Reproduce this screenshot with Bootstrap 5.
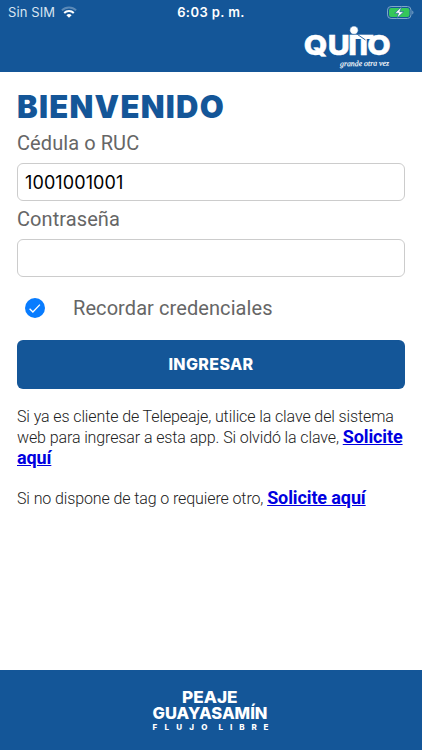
<!DOCTYPE html>
<html lang="es">
<head>
<meta charset="utf-8">
<meta name="viewport" content="width=device-width, initial-scale=1">
<title>Bienvenido</title>
<link href="https://cdn.jsdelivr.net/npm/bootstrap@5.3.0/dist/css/bootstrap.min.css" rel="stylesheet">
<style>
body{font-family:Roboto,"Liberation Sans",sans-serif;overflow:hidden}
.brand-bg{background:#145698}
.app-header{height:72px}
.status-row{height:24px;padding:0 8px 0 8px;font:400 13px/24px Inter,sans-serif}
.status-row .clock{font-weight:600;letter-spacing:.4px}
.status-row .carrier{color:#d7e4f1;letter-spacing:.1px}
.wifi{margin-left:6px}
.logo-row{padding-right:28px}
.app-main{padding:20px 17px 0}
.page-title{font:900 31px/30px Inter,sans-serif;color:#145698;margin:0 0 9px;height:30px;letter-spacing:1.25px;white-space:nowrap}
.field-label{font-size:20px;line-height:24px;color:#666;margin:0;display:block;letter-spacing:.08px}
.field-input{height:38px;border:1px solid #ccc;border-radius:6px;padding:0 7px;font:400 18px/36px Inter,sans-serif;color:#000;letter-spacing:.1px;box-shadow:none}
.field-gap{margin-bottom:5.5px}
.check-row{height:24px;padding-left:8px;gap:28px;margin:19px 0 20px}
.submit-btn{height:49px;border-radius:6px;font:800 16px/49px Inter,sans-serif;color:#fff;border:0;padding:0;letter-spacing:.35px}
.info-text{font-weight:300;font-size:16px;line-height:20px;color:#222;margin:0 0 19px;letter-spacing:-.11px}
.info-text:first-of-type{margin-top:18px}
.info-text a{font-weight:700;font-size:18px;line-height:20px;color:#0000e0;text-decoration:underline}
.app-footer{height:80px}
</style>
<script src="https://cdn.jsdelivr.net/npm/bootstrap@5.3.0/dist/js/bootstrap.bundle.min.js"></script>
</head>
<body class="bg-white vh-100 d-flex flex-column">
<header class="app-header brand-bg text-white flex-shrink-0">
  <div class="status-row row g-0">
    <div class="col d-flex align-items-center">
      <span class="carrier">Sin SIM</span>
      <svg class="wifi" width="16" height="12" viewBox="0 0 16 12" fill="none" stroke="#fff" stroke-width="2"><path d="M.9 4.4a10.2 10.2 0 0 1 14.2 0" opacity=".3"/><path d="M3.2 7a6.8 6.8 0 0 1 9.6 0"/><path d="M8 11.8 5.4 9.2a3.7 3.7 0 0 1 5.2 0z" fill="#fff" stroke="none"/></svg>
    </div>
    <div class="col-auto clock">6:03 p. m.</div>
    <div class="col d-flex align-items-center justify-content-end">
      <svg width="27" height="13" viewBox="0 0 27 13"><rect x=".5" y=".5" width="23.5" height="12" rx="3.6" fill="none" stroke="#7fa6c8"/><rect x="2" y="2" width="20.5" height="9" rx="2.2" fill="#34c759"/><path d="M25.3 4.5v4c1.5-.6 1.5-3.4 0-4" fill="#7fa6c8"/><path d="M14.6.8 7.8 7.2h3.8L9.9 12.2l6.8-6.5h-3.9z" fill="#fff" stroke="#145698" stroke-width=".6"/></svg>
    </div>
  </div>
  <div class="logo-row d-flex justify-content-end">
    <svg width="92" height="47" viewBox="302 24 92 47" fill="#fff" font-family="Inter,sans-serif">
      <text transform="translate(303 0) scale(1.1 1)" x="0.6 22.6 41.2 46 58.4" y="55" font-weight="800" font-size="27.5" stroke="#fff" stroke-width=".5">QUITO</text>
      <circle cx="354" cy="30.2" r="4.2" stroke="#145698" stroke-width=".6"/>
      <path d="m357.5 34.5 8 5.5" stroke="#145698" stroke-width=".9"/>
      <text x="340" y="66" font-family="Liberation Serif,serif" font-style="italic" font-size="8" textLength="49" lengthAdjust="spacingAndGlyphs" stroke="#fff" stroke-width=".15" transform="rotate(-1 365 65)">grande  otra vez</text>
    </svg>
  </div>
</header>
<main class="app-main flex-grow-1">
  <h1 class="page-title">BIENVENIDO</h1>
  <form>
    <label class="field-label" for="user">Cédula o RUC</label>
    <input class="form-control field-input field-gap mt-2" id="user" type="text" value="1001001001">
    <label class="field-label" for="pass">Contraseña</label>
    <input class="form-control field-input mt-2" id="pass" type="password">
    <div class="check-row d-flex align-items-center">
      <svg width="20" height="20" viewBox="0 0 20 20"><circle cx="10" cy="10" r="10" fill="#087cff"/><path d="m4.6 10.7 3.3 3.3 7-7.4" fill="none" stroke="#fff" stroke-width="1.3"/></svg>
      <span class="field-label">Recordar credenciales</span>
    </div>
    <button class="btn submit-btn brand-bg w-100" type="button">INGRESAR</button>
  </form>
  <p class="info-text">Si ya es cliente de Telepeaje, utilice la clave del sistema web para ingresar a esta app. Si olvidó la clave, <a href="#">Solicite aquí</a></p>
  <p class="info-text">Si no dispone de tag o requiere otro, <a href="#">Solicite aquí</a></p>
</main>
<footer class="app-footer brand-bg flex-shrink-0 d-flex justify-content-center">
  <svg width="130" height="80" viewBox="145 670 130 80" fill="#fff" font-family="Inter,sans-serif" font-weight="800">
    <text x="181" y="702.5" font-size="16.5" textLength="55.5" lengthAdjust="spacingAndGlyphs">PEAJE</text>
    <text x="151.5" y="718.8" font-size="16.5" textLength="115" lengthAdjust="spacingAndGlyphs">GUAYASAMÍN</text>
    <text x="151.5" y="730.2" font-size="8" textLength="55">FLUJO</text>
    <text x="217.5" y="730.2" font-size="8" textLength="50">LIBRE</text>
  </svg>
</footer>
</body>
</html>
